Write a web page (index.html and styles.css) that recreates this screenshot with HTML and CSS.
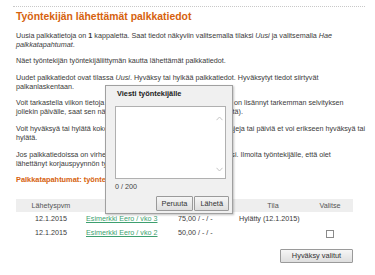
FILE: index.html
```html
<!DOCTYPE html>
<html lang="fi">
<head>
<meta charset="utf-8">
<link rel="stylesheet" href="styles.css">
</head>
<body>
<div class="page">
  <div class="rule"></div>
  <h1 class="title">Työntekijän lähettämät palkkatiedot</h1>
  <p>Uusia palkkatietoja on <b>1</b> kappaletta. Saat tiedot näkyviin valitsemalla tilaksi <i>Uusi</i> ja valitsemalla <i>Hae</i><br><i>palkkatapahtumat</i>.</p>
  <p>Näet työntekijän työntekijäliittymän kautta lähettämät palkkatiedot.</p>
  <p>Uudet palkkatiedot ovat tilassa <i>Uusi</i>. Hyväksy tai hylkää palkkatiedot. Hyväksytyt tiedot siirtyvät<br>palkanlaskentaan.</p>
  <p>Voit tarkastella viikon tietoja tarkemmin avaamalla ne. Jos työntekijä on lisännyt tarkemman selvityksen<br>jollekin päivälle, saat sen näkyviin valitsemalla päivän kohdalta (Näytä).</p>
  <p>Voit hyväksyä tai hylätä kokonaisen viikon tiedot. Yksittäisiä palkkalajeja tai päiviä et voi erikseen hyväksyä tai<br>hylätä.</p>
  <p>Jos palkkatiedoissa on virheitä, palauta ne uudelleen hyväksyttäväksi. Ilmoita työntekijälle, että olet<br>lähettänyt korjauspyynnön työntekijälle.</p>
  <h2 class="subtitle">Palkkatapahtumat: työntekijä</h2>
  <table class="events">
    <colgroup>
      <col class="c1"><col class="c2"><col class="c3"><col class="c4"><col class="c5">
    </colgroup>
    <thead>
      <tr><th>Lähetyspvm</th><th>Tapahtuma</th><th></th><th>Tila</th><th>Valitse</th></tr>
    </thead>
    <tbody>
      <tr>
        <td class="center">12.1.2015</td>
        <td><a href="#">Esimerkki Eero / vko 3</a></td>
        <td>75,00 / - / -</td>
        <td>Hylätty (12.1.2015)</td>
        <td class="center"></td>
      </tr>
      <tr>
        <td class="center">12.1.2015</td>
        <td><a href="#">Esimerkki Eero / vko 2</a></td>
        <td>50,00 / - / -</td>
        <td></td>
        <td class="center"><span class="check"></span></td>
      </tr>
    </tbody>
  </table>
  <div class="actions"><button class="btn wide">Hyväksy valitut</button></div>
</div>

<div class="dialog">
  <div class="dlg-title">Viesti työntekijälle</div>
  <div class="textbox">
    <div class="text-area"></div>
    <div class="scroll">
      <svg width="7" height="5" viewBox="0 0 7 5"><path d="M0.5 4.2 L3.5 1 L6.5 4.2" fill="none" stroke="#c4c4c4" stroke-width="1"/></svg>
      <svg width="7" height="5" viewBox="0 0 7 5"><path d="M0.5 0.8 L3.5 4 L6.5 0.8" fill="none" stroke="#c4c4c4" stroke-width="1"/></svg>
    </div>
  </div>
  <div class="counter">0 / 200</div>
  <div class="dlg-buttons">
    <button class="btn">Peruuta</button><button class="btn">Lähetä</button>
  </div>
</div>
</body>
</html>
```
FILE: styles.css
```css
html, body {
  margin: 0;
  padding: 0;
  background: #ffffff;
}
body {
  font-family: "Liberation Sans", Arial, sans-serif;
  font-size: 7.2px;
  line-height: 9px;
  color: #3a3a3a;
  width: 375px;
  height: 275px;
  overflow: hidden;
  position: relative;
}
.page {
  padding: 6px 9px 0 13px;
}
.rule {
  border-top: 1px dotted #c8c8c8;
  width: 352px;
}
.title {
  margin: 4px 0 0 3px;
  font-size: 10.4px;
  line-height: 12px;
  font-weight: bold;
  color: #d6620e;
}
p {
  margin: 7.6px 0 0 3px;
}
.subtitle {
  margin: 7.6px 0 0 3px;
  font-size: 7.4px;
  line-height: 9px;
  font-weight: bold;
  color: #d6620e;
}
.events {
  margin: 14.8px 0 0 3px;
  border-collapse: collapse;
  table-layout: fixed;
  width: 337px;
}
.c1 { width: 70px; }
.c2 { width: 92px; }
.c3 { width: 61px; }
.c4 { width: 68px; }
.c5 { width: 46px; }
.events th {
  background: #eeeeee;
  font-weight: normal;
  color: #555;
  height: 13px;
  padding: 0;
  text-align: center;
}
.events td {
  height: 14px;
  padding: 0;
  white-space: nowrap;
}
.events td.center { text-align: center; }
.events a {
  color: #3d9f6f;
  text-decoration: underline;
}
.check {
  display: inline-block;
  width: 6px;
  height: 6px;
  border: 1px solid #8a8a8a;
  background: #fff;
  vertical-align: middle;
}
.actions {
  display: flex;
  justify-content: flex-end;
  width: 340px;
  margin-top: 9px;
}
.btn {
  font-family: "Liberation Sans", Arial, sans-serif;
  font-size: 7.4px;
  line-height: 9px;
  color: #333;
  background: linear-gradient(#f6f6f6, #dedede);
  border: 1px solid #9a9a9a;
  border-radius: 1px;
  padding: 2px 6px;
  margin: 0;
}
.btn.wide {
  width: 73px;
  height: 14px;
  padding: 0;
}
.dialog {
  position: absolute;
  left: 105px;
  top: 85px;
  width: 128px;
  height: 129px;
  box-sizing: border-box;
  background: #f0f0f0;
  border: 1px solid #a0a0a0;
  box-shadow: 1px 1px 2px rgba(0,0,0,0.25);
  padding: 3px 6px 0 9px;
  display: flex;
  flex-direction: column;
}
.dlg-title {
  font-weight: bold;
  font-size: 7.4px;
  line-height: 10px;
  color: #222;
  padding-left: 2px;
}
.textbox {
  margin-top: 7px;
  width: 111px;
  height: 73px;
  box-sizing: border-box;
  background: #fff;
  border: 1px solid #b0b0b0;
  display: flex;
}
.text-area { flex: 1; }
.scroll {
  width: 12px;
  display: flex;
  flex-direction: column;
  justify-content: space-between;
  align-items: center;
  padding: 9px 0 6px;
}
.scroll svg { display: block; }
.counter {
  margin-top: 3px;
  color: #444;
}
.dlg-buttons {
  display: flex;
  justify-content: flex-end;
  margin-top: 5px;
  margin-right: -3px;
}
.dlg-buttons .btn {
  height: 15px;
  padding: 0 5px;
}
.dlg-buttons .btn + .btn {
  margin-left: 1px;
}
```
